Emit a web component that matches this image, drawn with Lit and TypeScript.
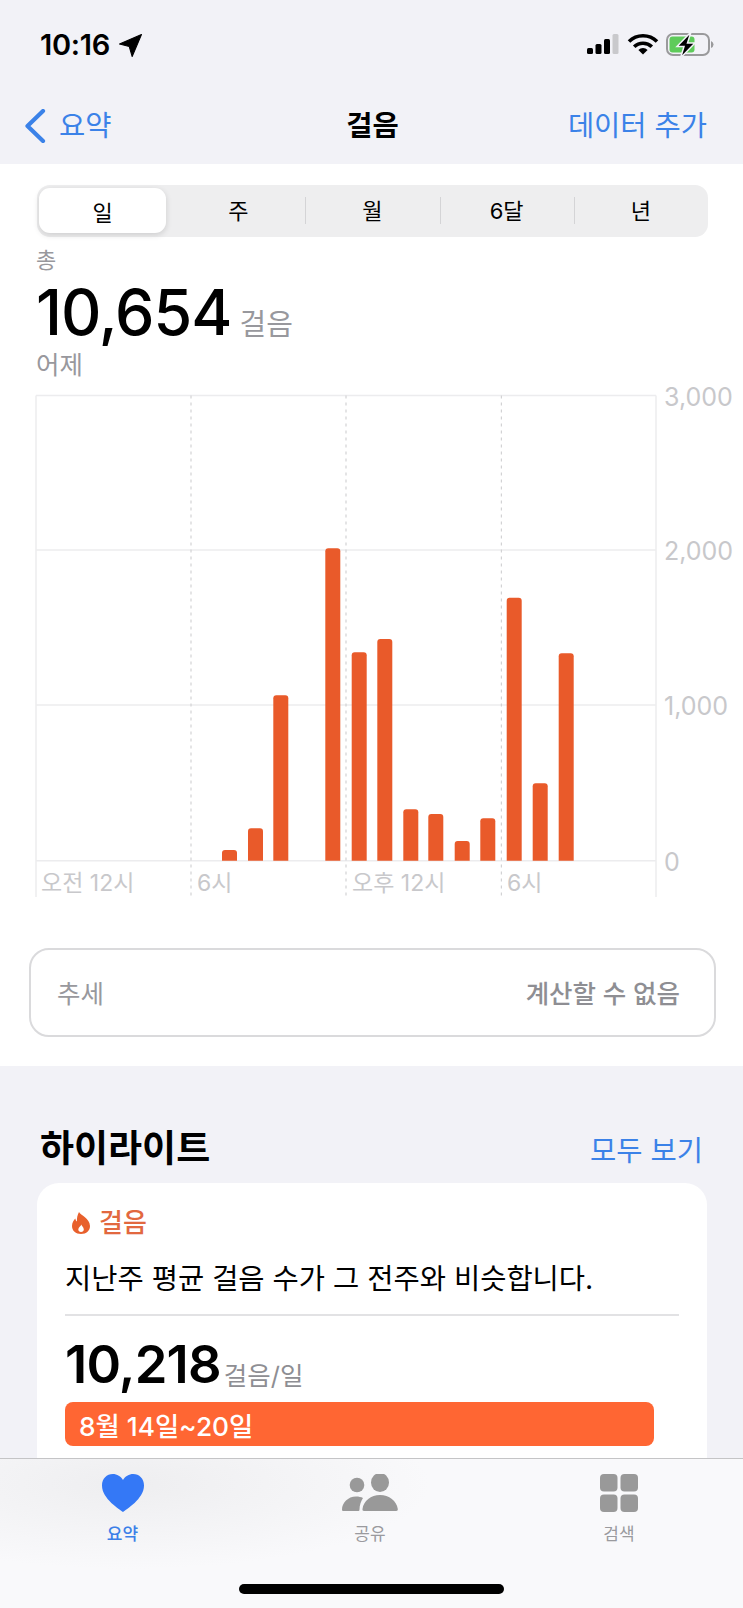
import { LitElement, html, css, svg } from "lit";
import { customElement } from "lit/decorators.js";

const BARS: [number, number][] = [
  [222, 850], [248, 828.3], [273.3, 695.3], [325.3, 548.3], [351.7, 652.3], [377.3, 639], [403.3, 809.3],
  [428.3, 814], [454.7, 841], [480.3, 818.3], [506.7, 597.7], [532.7, 783.3], [558.7, 653.3],
];
const Y0 = 380; // page y of the chart's top edge

@customElement("app-root")
export class AppRoot extends LitElement {
  static styles = css`
    :host {
      display: block;
      position: relative;
      width: 743px;
      height: 1608px;
      overflow: hidden;
      background: #f2f2f7;
      font-family: "Inter", "Noto Sans CJK KR", sans-serif;
      color: #000;
    }
    .status {
      height: 90px;
      box-sizing: border-box;
      padding: 30px 29px 0 40px;
      display: flex;
      justify-content: space-between;
      align-items: flex-start;
    }
    .time { display: flex; align-items: center; gap: 9px; font-size: 29px; line-height: 30px; font-weight: 600; letter-spacing: -0.3px; }
    .nav {
      height: 74px;
      box-sizing: border-box;
      padding: 0 36px 2px 24px;
      display: grid;
      grid-template-columns: 1fr auto 1fr;
      align-items: center;
      font-size: 28.5px;
      line-height: 40px;
    }
    .back { display: flex; align-items: center; gap: 13px; color: #3b82e8; }
    .title { font-weight: 600; margin-left: 14px; }
    .add { justify-self: end; color: #3b82e8; }
    .white { background: #fff; height: 902px; box-sizing: border-box; padding-top: 21px; }
    .seg {
      margin: 0 35px 0 37px;
      height: 52px;
      background: #eeeeef;
      border-radius: 13px;
      display: grid;
      grid-template-columns: repeat(5, 134.2px);
      font-size: 22px;
    }
    .seg div { display: flex; align-items: center; justify-content: center; position: relative; padding-bottom: 4px; }
    .seg .sel {
      background: #fff;
      border-radius: 11px;
      margin: 3px 5px 4px 2px;
      padding-bottom: 0;
      box-shadow: 0 2px 6px rgba(0, 0, 0, 0.14);
    }
    .seg .sep::before {
      content: "";
      position: absolute;
      left: 0;
      top: 12px;
      bottom: 13px;
      width: 1px;
      background: #d4d4d6;
    }
    .summary { padding-left: 36px; }
    .lab { font-size: 22px; line-height: 28px; color: #98989d; padding-top: 9px; }
    .total { display: flex; align-items: baseline; gap: 8px; height: 66px; margin-top: 5px; font-size: 62.7px; line-height: 66px; font-weight: 500; letter-spacing: -1px; }
    .total span { font-size: 29px; font-weight: 400; color: #98989d; letter-spacing: 0; }
    .day { font-size: 25.5px; line-height: 30px; margin-top: 5px; color: #98989d; }
    svg.chart { display: block; }
    .chart text { font-family: "Inter", "Noto Sans CJK KR", sans-serif; fill: #c8c8cb; }
    .trend {
      margin: 48px 27px 0 29px;
      height: 89px;
      box-sizing: border-box;
      border: 2px solid #dadadc;
      border-radius: 20px;
      display: flex;
      justify-content: space-between;
      align-items: center;
      padding: 0 34px 3px 26px;
      font-size: 25.5px;
      color: #98989d;
    }
    .trend b { font-weight: 500; color: #8e8e93; }
    .hl { padding: 0 36px 0 37px; }
    .hl-head { display: flex; justify-content: space-between; align-items: center; height: 117px; padding: 49px 4px 0 3px; box-sizing: border-box; }
    .hl-head h2 { margin: 0; font-size: 37px; font-weight: 700; line-height: 44px; }
    .hl-head a { color: #3b82e8; font-size: 28.5px; line-height: 40px; margin-top: 3px; }
    .card { background: #fff; border-radius: 22px; height: 340px; box-sizing: border-box; padding: 22px 28px 0 28px; }
    .kicker { display: flex; align-items: center; gap: 9px; padding-left: 7px; color: #e2683f; font-size: 26px; line-height: 36px; font-weight: 500; }
    .msg { font-size: 28.5px; line-height: 40px; margin-top: 18px; padding-bottom: 15px; border-bottom: 2px solid #e2e2e4; white-space: nowrap; }
    .avg { display: flex; align-items: baseline; gap: 3px; margin-top: 20px; font-size: 52.5px; line-height: 56px; font-weight: 600; letter-spacing: -0.8px; }
    .avg span { font-size: 25.5px; font-weight: 400; color: #8e8e93; letter-spacing: 0; position: relative; top: 2px; }
    .range {
      margin-top: 0;
      width: 589px;
      height: 44px;
      box-sizing: border-box;
      padding-left: 14px;
      display: flex;
      align-items: center;
      background: #ff6633;
      border-radius: 8px;
      color: #fff;
      font-size: 26.3px;
      font-weight: 500;
    }
    .tabs {
      position: absolute;
      left: 0;
      right: 0;
      top: 1458px;
      height: 150px;
      box-sizing: border-box;
      border-top: 1px solid #c4c4c6;
      background: radial-gradient(ellipse 300px 85px at 130px 25px, #eeeef0, rgba(238, 238, 240, 0)), #f9f9fb;
      display: grid;
      grid-template-columns: 245px 250px 248px;
      padding-top: 15px;
    }
    .tab { display: flex; flex-direction: column; align-items: center; gap: 10px; font-size: 17px; line-height: 24px; color: #9a9a9e; }
    .tab.on { color: #3b7fe8; font-weight: 500; }
    .tab svg { display: block; }
    .home { position: absolute; left: 239px; top: 1584px; width: 265px; height: 10px; border-radius: 5px; background: #000; }
    .gl { stroke: #ececee; stroke-width: 1.5; fill: none; }
    .dash { stroke: #d2d2d4; stroke-width: 1.2; stroke-dasharray: 3 4; fill: none; }
    .bar { fill: #e95a2a; }
  `;

  private chart() {
    const y = (v: number) => v - Y0;
    const bottom = 860.7;
    return html`<svg class="chart" width="743" height="520" viewBox="0 0 743 520">
      ${[395.6, 550, 705, bottom].map((l) => svg`<line class="gl" x1="36" x2="656" y1=${y(l)} y2=${y(l)}></line>`)}
      ${[36, 656].map((x) => svg`<line class="gl" x1=${x} x2=${x} y1=${y(395.6)} y2=${y(897)}></line>`)}
      ${[191, 346, 501.4].map((x) => svg`<line class="dash" x1=${x} x2=${x} y1=${y(395.6)} y2=${y(897)}></line>`)}
      ${BARS.map(([x, top]) => svg`<path class="bar" d="M${x} ${y(bottom)}V${y(top) + 3}q0-3 3-3h9q3 0 3 3V${y(bottom)}z"></path>`)}
      ${[["3,000", 396.5], ["2,000", 550.5], ["1,000", 705.5], ["0", 861.5]].map(
        ([t, v]) => svg`<text x="664" y=${y(v as number) + 9} font-size="25">${t}</text>`
      )}
      ${[["오전 12시", 41], ["6시", 197], ["오후 12시", 352], ["6시", 507]].map(
        ([t, x]) => svg`<text x=${x} y=${y(891)} font-size="23">${t}</text>`
      )}
    </svg>`;
  }

  render() {
    return html`
      <div class="status">
        <div class="time">10:16
          <svg width="23" height="23" viewBox="0 0 22 22"><path d="M21.5 .5 12.6 21.5 9.8 12 .5 9.6z" fill="#000" stroke="#000" stroke-linejoin="round"/></svg>
        </div>
        <svg width="128" height="26" viewBox="0 0 128 26" style="margin-top:3px">
          <rect x="1" y="15" width="6" height="6" rx="1.5" fill="#000"/>
          <rect x="9.5" y="11" width="6" height="10" rx="1.5" fill="#000"/>
          <rect x="18" y="6" width="6" height="15" rx="1.5" fill="#000"/>
          <rect x="26.5" y="1" width="6" height="20" rx="1.5" fill="#c9c9cc"/>
          <path d="M43 8.5a20 20 0 0 1 28 0" fill="none" stroke="#000" stroke-width="3.6"/>
          <path d="M48.2 13.8a12.5 12.5 0 0 1 17.6 0" fill="none" stroke="#000" stroke-width="3.6"/>
          <path d="M57 21.5l-4.6-4.6a6.5 6.5 0 0 1 9.2 0z" fill="#000"/>
          <rect x="81" y="1" width="42" height="21" rx="6" fill="none" stroke="#9a9a9c" stroke-width="2"/>
          <rect x="83.5" y="3.5" width="25" height="16" rx="3" fill="#5ecb5a"/>
          <path d="M125 8v7q2.5-1 2.5-3.5T125 8z" fill="#9a9a9c"/>
          <path d="M105 -1 91 13.5h7L94.5 25 109 10h-7.5z" fill="#000" stroke="#f2f2f7" stroke-width="1.5"/>
        </svg>
      </div>
      <div class="nav">
        <div class="back">
          <svg width="22" height="34" viewBox="0 0 22 34"><path d="M19 2 3.5 17 19 32" fill="none" stroke="#3b82e8" stroke-width="4.2" stroke-linecap="round" stroke-linejoin="round"/></svg>
          <span>요약</span>
        </div>
        <div class="title">걸음</div>
        <div class="add">데이터 추가</div>
      </div>
      <div class="white">
        <div class="seg">
          <div class="sel">일</div><div>주</div><div class="sep">월</div><div class="sep">6달</div><div class="sep">년</div>
        </div>
        <div class="summary">
          <div class="lab">총</div>
          <div class="total">10,654<span>걸음</span></div>
          <div class="day">어제</div>
        </div>
        ${this.chart()}
        <div class="trend"><span>추세</span><b>계산할 수 없음</b></div>
      </div>
      <div class="hl">
        <div class="hl-head"><h2>하이라이트</h2><a>모두 보기</a></div>
        <div class="card">
          <div class="kicker">
            <svg width="18" height="22" viewBox="0 0 18 22"><path fill-rule="evenodd" d="M7 0C8.500 3 17.800 6.500 18 14 18 18.500 14.500 22 9 22 3.800 22 0 18.800 0 14 0 10.500 2 8 3.300 6.500 3.600 8 4.200 9 5 9.500 4.700 6 5.500 3 7 0zM9.300 12.500C9 14.300 6.300 15.300 6.300 17.500 6.300 19 7.500 20 9 20 10.700 20 11.800 18.900 11.800 17.500 11.800 15.300 9.800 14.300 9.300 12.500z" fill="#e8602c"/></svg>
            걸음
          </div>
          <div class="msg">지난주 평균 걸음 수가 그 전주와 비슷합니다.</div>
          <div class="avg">10,218<span>걸음/일</span></div>
          <div class="range">8월 14일~20일</div>
        </div>
      </div>
      <div class="tabs">
        <div class="tab on">
          <svg width="42" height="38" viewBox="0 0 42 38"><path d="M21 38C18 35.500 0 25 0 11.500 0 4.500 4.800 0 10.800 0 15 0 19 2.500 21 6 23 2.500 27 0 31.200 0 37.200 0 42 4.500 42 11.500 42 25 24 35.500 21 38z" fill="#3478f6"/></svg>
          요약
        </div>
        <div class="tab">
          <svg width="56" height="38" viewBox="0 0 56 38" fill="#999"><circle cx="15" cy="11" r="7.300"/><ellipse cx="38" cy="8.500" rx="9" ry="9.500"/><path d="M1.500 37h15q1 0 1-1.500C17.500 31 19 27 21 24 19 23 17 22.500 14 22.500 6 22.500 0 29 0 35.500 0 36.500.5 37 1.500 37z"/><path d="M22 37C20.800 37 20.300 36 20.500 35 21.500 27 29 21 38 21S54.800 27 55.800 35C56 36 55.300 37 54.300 37z"/></svg>
          공유
        </div>
        <div class="tab">
          <svg width="38" height="38" viewBox="0 0 38 38" fill="#999"><rect width="17.500" height="17.500" rx="4"/><rect x="20.500" width="17.500" height="17.500" rx="4"/><rect y="20.500" width="17.500" height="17.500" rx="4"/><rect x="20.500" y="20.500" width="17.500" height="17.500" rx="4"/></svg>
          검색
        </div>
      </div>
      <div class="home"></div>
    `;
  }
}
